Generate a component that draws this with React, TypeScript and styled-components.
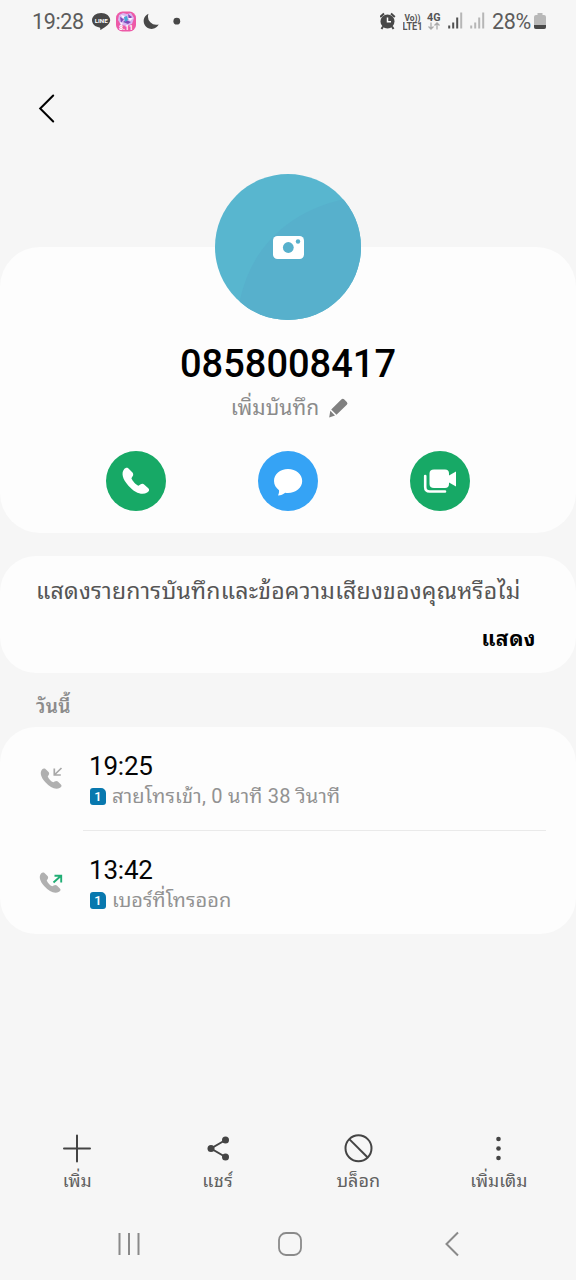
import React from "react";
import styled, { createGlobalStyle } from "styled-components";

const GlobalStyle = createGlobalStyle`
  * { box-sizing: border-box; }
  body { margin: 0; background: #f6f6f6; }
  svg { display: block; flex: none; }
`;

const Screen = styled.div`
  width: 576px;
  height: 1280px;
  display: flex;
  flex-direction: column;
  background: #f6f6f6;
  font-family: Roboto, "Noto Sans Thai Looped", "Noto Looped Thai", Loma, "Noto Sans", sans-serif;
  overflow: hidden;
`;

const StatusBar = styled.div`
  height: 44px;
  padding: 0 30px 0 32px;
  display: flex;
  align-items: center;
  color: #5c5c5c;
`;
const StatusText = styled.span<{ $width: number }>`
  width: ${(p) => p.$width}px;
  font-size: 21.5px;
  line-height: 24px;
  letter-spacing: -0.35px;
  white-space: nowrap;
`;
const StatusIcons = styled.div<{ $right?: boolean }>`
  display: flex;
  align-items: center;
  margin-left: ${(p) => (p.$right ? "auto" : "7px")};
`;

const Header = styled.header`
  height: 203px;
  padding: 50px 0 0 38px;
`;

const Card = styled.section<{ $height: number; $radius: number }>`
  flex: none;
  height: ${(p) => p.$height}px;
  border-radius: ${(p) => p.$radius}px;
  background: #fdfdfd;
`;
const ProfileCard = styled(Card)`
  display: flex;
  flex-direction: column;
  align-items: center;
  margin-bottom: 23px;
`;
const Avatar = styled.div`
  width: 146px;
  height: 146px;
  flex: none;
  margin-top: -73px;
`;
const PhoneNumber = styled.h1`
  margin: 20px 0 0;
  height: 50px;
  font-size: 38px;
  line-height: 48px;
  font-weight: 500;
  color: #000;
`;
const NoteRow = styled.div`
  height: 36px;
  margin-left: 4px;
  display: flex;
  align-items: center;
  gap: 9px;
`;
const Label = styled.span<{ $size: number; $color: string; $weight?: number; $spacing?: number }>`
  font-size: ${(p) => p.$size}px;
  line-height: 30px;
  color: ${(p) => p.$color};
  font-weight: ${(p) => p.$weight ?? 400};
  letter-spacing: ${(p) => p.$spacing ?? 0}px;
  white-space: nowrap;
`;
const Actions = styled.div`
  margin-top: 25px;
  margin-right: 1px;
  display: flex;
  gap: 92px;
`;
const ActionButton = styled.button<{ $color: string }>`
  width: 60px;
  height: 60px;
  padding: 0;
  border: 0;
  border-radius: 50%;
  background: ${(p) => p.$color};
`;

const PromptCard = styled(Card)`
  display: flex;
  flex-direction: column;
  padding: 21px 40px 0 36px;
  gap: 17px;
`;
const PromptAction = styled.div`
  display: flex;
  justify-content: flex-end;
`;
const SectionTitle = styled.div`
  height: 54px;
  padding: 19px 36px 0;
`;
const CallRow = styled.div`
  height: 104px;
  padding: 0 30px 0 37px;
  display: flex;
`;
const CallIcon = styled.div`
  width: 46px;
  padding-top: 36px;
`;
const CallBody = styled.div<{ $divider?: boolean }>`
  flex: 1;
  padding: 24px 0 0 6px;
  height: 104px;
  border-bottom: ${(p) => (p.$divider ? "1px solid #eaeaea" : "0")};
`;
const CallTime = styled.div`
  font-size: 26px;
  line-height: 30px;
  letter-spacing: -0.2px;
  color: #050505;
`;
const CallDetail = styled.div`
  display: flex;
  align-items: center;
  gap: 6px;
  height: 30px;
`;
const SimBadge = styled.span`
  width: 16px;
  height: 17px;
  margin-left: 1px;
  border-radius: 3px 5px 3px 3px;
  background: #0878ae;
  color: #fff;
  font-size: 13px;
  line-height: 17px;
  font-weight: 500;
  text-align: center;
`;

const Toolbar = styled.nav`
  margin-top: auto;
  padding: 0 7px;
  height: 76px;
  display: grid;
  grid-template-columns: repeat(4, 1fr);
`;
const Tool = styled.div`
  display: flex;
  flex-direction: column;
  align-items: center;
  gap: 2px;
`;
const SystemNav = styled.div`
  height: 72px;
  padding: 0 43px 0 48px;
  display: grid;
  grid-template-columns: repeat(3, 1fr);
  align-items: center;
  justify-items: center;
`;

const handset =
  "M7.2 2.3 C5.800 1.300 4.300 1.900 3.100 3.300 C.2 6.900 1.200 12.800 7.400 19.700 C14 27 21 29.600 26.200 26.600 C28.300 25.300 28.700 23.700 27.300 22.300 L23.400 18.700 C22.100 17.500 20.600 17.600 19.300 18.600 L17.500 19.700 C14.900 18.800 11.500 15 10.400 12.200 L11.600 10.300 C12.500 9.100 12.400 7.800 11.500 6.500 Z";

function SignalBars({ strong }: { strong: number }) {
  return (
    <svg width="16" height="20" viewBox="0 0 16 20" fill="#505050">
      {[3, 6, 11, 16].map((h, i) => (
        <rect key={h} x={i * 4 + 0.2} y={16.5 - h} width="2" height={h} opacity={i < strong ? 1 : 0.38} />
      ))}
    </svg>
  );
}

function Status() {
  return (
    <StatusBar>
      <StatusText $width={53}>19:28</StatusText>
      <StatusIcons>
        <svg width="90" height="24" viewBox="0 0 90 24">
          <path d="M9.200 3C4 3 0 6.200 0 10.300c0 3.700 3.100 6.600 7.400 7.200 1 .2 1 .8.8 2.500 2.500-1 10-5.500 10-9.700C18.200 6.200 14.200 3 9.200 3Z" fill="#484848" />
          <text x="9.200" y="12.600" textAnchor="middle" fontSize="6.200" fontWeight="700" fill="#fff" fontFamily="Roboto, sans-serif">LINE</text>
          <rect x="24" y="1.500" width="20" height="20" rx="6.500" fill="#ed5aa7" />
          <path d="M27 5l4-2 4 1 4-1 3 5-2 6-5 2-6-1-3-5z" fill="#d9b6f0" />
          <path d="M28 7l4 2-3 4zM36 4l4 3-3 3zM31 12l3-2 5 2-3 2z" fill="#8148b9" />
          <path d="M29 5l4 1-2 3zM36 8l5 0-3 3zM28 12l3 1-2 2z" fill="#fff4ff" />
          <path d="M32 7l3-1 1 4-3 2z" fill="#43a8d6" />
          <text x="34" y="20.300" textAnchor="middle" fontSize="7" fontWeight="800" fill="#fff" fontFamily="Roboto, sans-serif">8.11</text>
          <path d="M56.500 3.700a7.900 7.900 0 1 0 10.200 10.700A8.300 8.300 0 0 1 56.500 3.700Z" fill="#484848" />
          <circle cx="84.800" cy="11.200" r="3.400" fill="#484848" />
        </svg>
      </StatusIcons>
      <StatusIcons $right>
        <svg width="23" height="22" viewBox="0 0 23 22">
          <circle cx="7.500" cy="10.500" r="7" fill="#484848" />
          <path d="M.2 6 4 2.600M14.800 6 11 2.600M3 15.500 1.500 18M12 15.500 13.500 18" stroke="#484848" strokeWidth="2" />
          <path d="M7.500 6.500v4.300H11" fill="none" stroke="#fff" strokeWidth="1.500" />
        </svg>
        <svg width="45" height="24" viewBox="0 0 45 24" fontFamily="Roboto, sans-serif" fontWeight="700" fill="#555">
          <text x="1.500" y="10.500" fontSize="9.500" textLength="16" lengthAdjust="spacingAndGlyphs">Vo))</text>
          <text x="-.5" y="19.500" fontSize="10" textLength="20" lengthAdjust="spacingAndGlyphs">LTE1</text>
          <text x="24" y="10.500" fontSize="11" textLength="13.500" lengthAdjust="spacingAndGlyphs">4G</text>
          <path d="M28 12.500v6.500M25.500 16.500l2.500 2.500 2.500-2.500M34 19.500v-6.500M31.500 15.500l2.500-2.500 2.500 2.500" fill="none" stroke="#aaa" strokeWidth="1.300" />
        </svg>
        <SignalBars strong={3} />
        <svg width="6" height="17" />
        <SignalBars strong={0} />
        <svg width="6" height="17" />
        <StatusText $width={42}>28%</StatusText>
        <svg width="12" height="20" viewBox="0 0 12 20">
          <path d="M3.500 1h5v2H10q2 0 2 2v10q0 2-2 2H2q-2 0-2-2V5q0-2 2-2h1.500z" fill="#b8b8b8" />
          <path d="M0 13h12v2q0 2-2 2H2q-2 0-2-2z" fill="#484848" />
        </svg>
      </StatusIcons>
    </StatusBar>
  );
}

function HistoryIcon({ outgoing }: { outgoing?: boolean }) {
  return (
    <svg width="28" height="30" viewBox="0 0 28 30">
      <path d={handset} transform={`translate(${outgoing ? 1.6 : 2.6} 4) scale(.78)`} fill="#b0b0b0" />
      {outgoing ? (
        <path d="M16.500 15.500 24 8.700M17.500 8.700h6.700V15.500" fill="none" stroke="#21ae75" strokeWidth="1.900" />
      ) : (
        <path d="M24.500 5 17.300 12M17.300 5.500v6.500h6.500" fill="none" stroke="#a8a8a8" strokeWidth="1.700" />
      )}
    </svg>
  );
}

export default function App() {
  return (
    <Screen>
      <GlobalStyle />
      <Status />
      <Header>
        <svg width="18" height="30" viewBox="0 0 18 30" fill="none" stroke="#000" strokeWidth="2" strokeLinecap="round">
          <path d="M15.200 1.500 2.200 14.500 15.200 27.500" />
        </svg>
      </Header>
      <ProfileCard $height={286} $radius={40}>
        <Avatar>
          <svg width="146" height="146" viewBox="0 0 146 146">
            <defs>
              <clipPath id="avatar"><circle cx="73" cy="73" r="73" /></clipPath>
            </defs>
            <g clipPath="url(#avatar)">
              <rect width="146" height="146" fill="#58b6cf" />
              <path d="M22 146C28 78 72 32 146 22v124z" fill="#57b0cc" />
            </g>
            <rect x="58" y="62" width="31" height="23" rx="4.500" fill="#fff" />
            <circle cx="73.300" cy="73.500" r="5.400" fill="#57b0cc" />
            <circle cx="83" cy="67.500" r="2.200" fill="#57b0cc" />
          </svg>
        </Avatar>
        <PhoneNumber>0858008417</PhoneNumber>
        <NoteRow>
          <Label $size={21} $color="#8b8b8b" $spacing={0.05}>เพิ่มบันทึก</Label>
          <svg width="21" height="20" viewBox="0 0 21 20" fill="#808080">
            <path d="M13.300 1.500q1.500-1.500 3 0l2.500 2.500q1.400 1.400 0 2.800L8.500 16.700 3.200 11.500z" />
            <path d="M2.300 12.700 7 17.500 1.200 19.500z" />
          </svg>
        </NoteRow>
        <Actions>
          <ActionButton $color="#17a966" aria-label="Call">
            <svg width="60" height="60" viewBox="0 0 60 60">
              <path d={handset} transform="translate(15 15)" fill="#fff" />
            </svg>
          </ActionButton>
          <ActionButton $color="#35a3f5" aria-label="Message">
            <svg width="60" height="60" viewBox="0 0 60 60" fill="#fff">
              <path d="M30 18c-8 0-14 5.200-14 12 0 3.700 2 7 5 9.200.3 2-.3 3.800-1 5.300 3 0 5.300-1.200 7.200-2.800 9 1.300 17-4 17-11.700C44.200 23.200 38 18 30 18Z" />
            </svg>
          </ActionButton>
          <ActionButton $color="#17a966" aria-label="Video call">
            <svg width="60" height="60" viewBox="0 0 60 60">
              <path d="M24 18.500h11q4 0 4 4v2l7-4v15l-7-4V33q0 4-4 4H24q-4.500 0-4.500-4V22.500q0-4 4.500-4Z" fill="#fff" />
              <path d="M15.200 25v11q0 4.500 4.500 4.500H35" fill="none" stroke="#fff" strokeWidth="2.600" strokeLinecap="round" />
            </svg>
          </ActionButton>
        </Actions>
      </ProfileCard>

      <PromptCard $height={117} $radius={36}>
        <Label $size={23} $color="#555" $spacing={0.22}>แสดงรายการบันทึกและข้อความเสียงของคุณหรือไม่</Label>
        <PromptAction>
          <Label $size={21} $color="#000" $weight={700} $spacing={0.5}>แสดง</Label>
        </PromptAction>
      </PromptCard>
      <SectionTitle>
        <Label $size={19} $color="#8b8b8b" $weight={600} $spacing={0.3}>วันนี้</Label>
      </SectionTitle>
      <Card $height={207} $radius={36}>
        <CallRow>
          <CallIcon><HistoryIcon /></CallIcon>
          <CallBody $divider>
            <CallTime>19:25</CallTime>
            <CallDetail>
              <SimBadge>1</SimBadge>
              <Label $size={20} $color="#929292" $spacing={0.22}>สายโทรเข้า, 0 นาที 38 วินาที</Label>
            </CallDetail>
          </CallBody>
        </CallRow>
        <CallRow>
          <CallIcon><HistoryIcon outgoing /></CallIcon>
          <CallBody>
            <CallTime>13:42</CallTime>
            <CallDetail>
              <SimBadge>1</SimBadge>
              <Label $size={20} $color="#929292" $spacing={0.05}>เบอร์ที่โทรออก</Label>
            </CallDetail>
          </CallBody>
        </CallRow>
      </Card>

      <Toolbar>
        <Tool>
          <svg width="32" height="32" viewBox="0 0 32 32" stroke="#444" strokeWidth="2" strokeLinecap="round">
            <path d="M16 3.500v26M3 16.500h26" />
          </svg>
          <Label $size={17.5} $color="#606060">เพิ่ม</Label>
        </Tool>
        <Tool>
          <svg width="32" height="32" viewBox="0 0 32 32" fill="#444">
            <path d="M23.500 8 9 16.500l14.500 8.500" fill="none" stroke="#444" strokeWidth="2" />
            <circle cx="23.500" cy="8" r="3.500" /><circle cx="9" cy="16.500" r="3.500" /><circle cx="23.500" cy="25" r="3.500" />
          </svg>
          <Label $size={18} $color="#606060" $spacing={0.5}>แชร์</Label>
        </Tool>
        <Tool>
          <svg width="32" height="32" viewBox="0 0 32 32" fill="none" stroke="#444" strokeWidth="2">
            <circle cx="16.500" cy="16.300" r="13" /><path d="m7.300 7.100 18.400 18.400" />
          </svg>
          <Label $size={18} $color="#606060">บล็อก</Label>
        </Tool>
        <Tool>
          <svg width="32" height="32" viewBox="0 0 32 32" fill="#444">
            <circle cx="15.500" cy="7" r="2.300" /><circle cx="15.500" cy="16.500" r="2.300" /><circle cx="15.500" cy="26" r="2.300" />
          </svg>
          <Label $size={17.5} $color="#606060">เพิ่มเติม</Label>
        </Tool>
      </Toolbar>
      <SystemNav>
        <svg width="24" height="24" viewBox="0 0 24 24" stroke="#8a8a8a" strokeWidth="2">
          <path d="M2.500 1v22M12 1v22M21.500 1v22" />
        </svg>
        <svg width="24" height="24" viewBox="0 0 24 24" fill="none" stroke="#8a8a8a" strokeWidth="1.800">
          <rect x="1" y="1" width="22" height="22" rx="7" />
        </svg>
        <svg width="16" height="26" viewBox="0 0 16 26" fill="none" stroke="#8a8a8a" strokeWidth="2">
          <path d="M14 1.500 2.500 13 14 24.500" />
        </svg>
      </SystemNav>
    </Screen>
  );
}
